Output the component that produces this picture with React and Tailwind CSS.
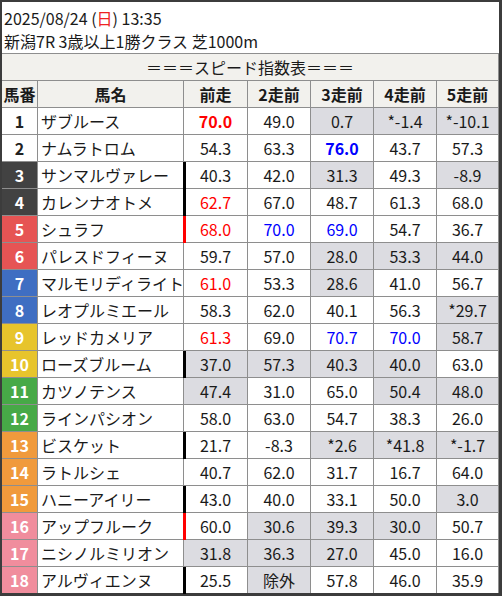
import React from "react";

const G = "g";
const R = "r";
const RB = "rb";
const B = "b";
const BB = "bb";

const rows = [
  [1, "ザブルース", [["70.0", RB], "49.0", ["0.7", G], ["*-1.4", G], ["*-10.1", G]], null],
  [2, "ナムラトロム", ["54.3", "63.3", ["76.0", BB], "43.7", "57.3"], null],
  [3, "サンマルヴァレー", ["40.3", "42.0", ["31.3", G], "49.3", ["-8.9", G]], "k"],
  [4, "カレンナオトメ", [["62.7", R], "67.0", "48.7", "61.3", "68.0"], "k"],
  [5, "シュラフ", [["68.0", R], ["70.0", B], ["69.0", B], "54.7", "36.7"], "r"],
  [6, "パレスドフィーヌ", ["59.7", "57.0", ["28.0", G], ["53.3", G], ["44.0", G]], null],
  [7, "マルモリディライト", [["61.0", R], "53.3", ["28.6", G], "41.0", "56.7"], null],
  [8, "レオプルミエール", ["58.3", "62.0", "40.1", "56.3", ["*29.7", G]], null],
  [9, "レッドカメリア", [["61.3", R], "69.0", ["70.7", B], ["70.0", B], ["58.7", G]], null],
  [10, "ローズブルーム", [["37.0", G], ["57.3", G], ["40.3", G], ["40.0", G], "63.0"], "k"],
  [11, "カツノテンス", [["47.4", G], "31.0", "65.0", ["50.4", G], ["48.0", G]], null],
  [12, "ラインパシオン", ["58.0", "63.0", "54.7", "38.3", "26.0"], null],
  [13, "ビスケット", ["21.7", "-8.3", ["*2.6", G], ["*41.8", G], ["*-1.7", G]], "k"],
  [14, "ラトルシェ", ["40.7", "62.0", "31.7", "16.7", "64.0"], null],
  [15, "ハニーアイリー", ["43.0", "40.0", "33.1", "50.0", ["3.0", G]], "k"],
  [16, "アップフルーク", ["60.0", ["30.6", G], ["39.3", G], ["30.0", G], "50.7"], "r"],
  [17, "ニシノルミリオン", [["31.8", G], ["36.3", G], ["27.0", G], "45.0", "16.0"], null],
  [18, "アルヴィエンヌ", ["25.5", ["除外", G], "57.8", "46.0", "35.9"], "k"],
];

const frame = (n) => {
  if (n <= 2) return "bg-white text-[#222]";
  if (n <= 4) return "bg-[#424242] text-white";
  if (n <= 6) return "bg-[#e65454] text-white";
  if (n <= 8) return "bg-[#3f6ec2] text-white";
  if (n <= 10) return "bg-[#e7c42c] text-white";
  if (n <= 12) return "bg-[#47a947] text-white";
  if (n <= 15) return "bg-[#f09a3c] text-white";
  return "bg-[#f08d9d] text-white";
};

const colW = ["w-[36px]", "w-[146px]", "w-[64px]", "w-[63px]", "w-[63px]", "w-[63px]", "w-[62px]"];

function Cell({ v, i, bar }) {
  let text = v;
  let kind = null;
  if (Array.isArray(v)) {
    text = v[0];
    kind = v[1];
  }
  let cls = "text-[#1a1a1a]";
  if (kind === R) cls = "text-[#ff0000]";
  if (kind === RB) cls = "text-[#ff0000] font-bold";
  if (kind === B) cls = "text-[#0000ff]";
  if (kind === BB) cls = "text-[#0000ff] font-bold";
  const bg = kind === G ? "bg-[#dcdce1]" : "bg-white";
  return (
    <div
      className={`${colW[i + 2]} ${bg} ${cls} relative flex items-center justify-center border-r border-[#8e8e8e]`}
    >
      {i === 0 && bar && (
        <span
          className={`absolute left-[-1px] top-0 bottom-[-1px] w-[3px] ${bar === "r" ? "bg-[#ff0000]" : "bg-black"}`}
        />
      )}
      {text}
    </div>
  );
}

export default function App() {
  const font = { fontFamily: '"Noto Sans CJK JP", "Noto Sans", sans-serif' };
  return (
    <div
      className="w-[502px] h-[596px] bg-white border-l-2 border-t-2 border-r-[3px] border-b-[3px] border-[#3c3c3c] text-[16px] leading-none text-[#1a1a1a]"
      style={font}
    >
      <div className="h-[52px] border-b border-[#8e8e8e] pl-[2px] pt-[4px] flex flex-col">
        <div className="h-[23px] flex items-center">
          2025/08/24 (<span className="text-[#ee2222]">日</span>) 13:35
        </div>
        <div className="h-[24px] flex items-center">新潟7R 3歳以上1勝クラス 芝1000m</div>
      </div>
      <div className="h-[27px] border-b border-[#8e8e8e] bg-[#f2f1ed] flex items-center justify-center border-r border-r-[#8e8e8e]">
        ＝＝＝スピード指数表＝＝＝
      </div>
      <div className="h-[27px] border-b border-[#8e8e8e] bg-[#f2f1ed] flex font-bold">
        {["馬番", "馬名", "前走", "2走前", "3走前", "4走前", "5走前"].map((h, i) => (
          <div
            key={h}
            className={`${colW[i]} flex items-center justify-center border-r border-[#8e8e8e]`}
          >
            {h}
          </div>
        ))}
      </div>
      {rows.map(([n, name, vals, bar], ri) => (
        <div
          key={n}
          className={`flex ${ri === rows.length - 1 ? "h-[26px]" : "h-[27px] border-b border-[#8e8e8e]"}`}
        >
          <div
            className={`${colW[0]} ${frame(n)} flex items-center justify-center font-bold border-r border-[#8e8e8e]`}
          >
            {n}
          </div>
          <div className={`${colW[1]} flex items-center pl-[3px] border-r border-[#8e8e8e] whitespace-nowrap`}>
            {name}
          </div>
          {vals.map((v, i) => (
            <Cell key={i} v={v} i={i} bar={bar} />
          ))}
        </div>
      ))}
    </div>
  );
}
